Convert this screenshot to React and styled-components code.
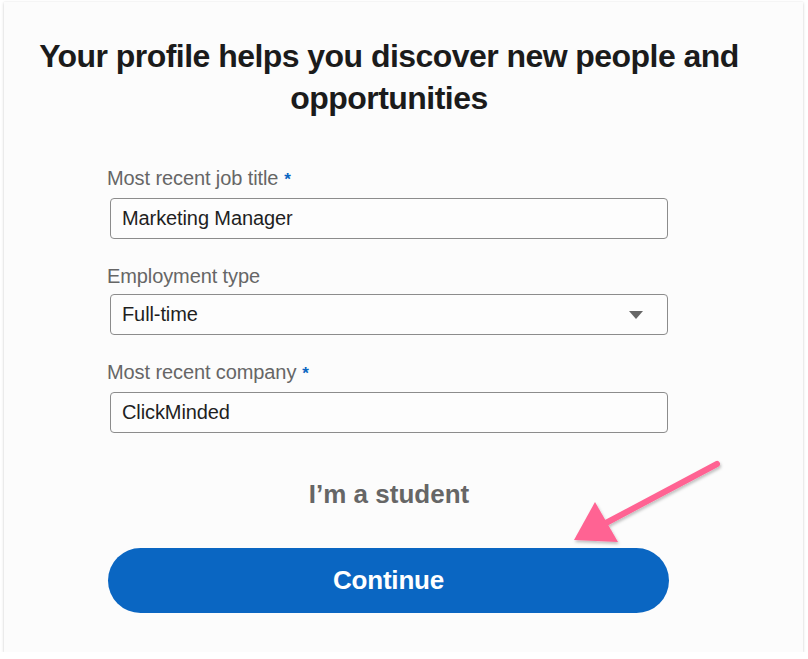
import React from "react";
import styled, { createGlobalStyle } from "styled-components";

const GlobalStyle = createGlobalStyle`
  html, body { margin: 0; padding: 0; background: #ffffff; }
  body { font-family: "Liberation Sans", Arial, Helvetica, sans-serif; }
  * { box-sizing: border-box; }
`;

const Card = styled.div`
  position: relative;
  margin: 2px 0 0 4px;
  width: 799px;
  height: 650px;
  padding-right: 29px;
  background: #fcfcfc;
  box-shadow: 0 1px 3px rgba(0, 0, 0, 0.18), 0 0 1px rgba(0, 0, 0, 0.08);
  display: flex;
  flex-direction: column;
  align-items: center;
`;

const Title = styled.h1`
  margin: 33px 0 0;
  width: 740px;
  text-align: center;
  font-size: 32px;
  line-height: 42px;
  font-weight: 700;
  color: #1b1b1b;
  letter-spacing: -0.55px;
`;

const Form = styled.form`
  margin-top: 47px;
  width: 558px;
  display: flex;
  flex-direction: column;
  align-items: stretch;
`;

const Field = styled.div`
  display: flex;
  flex-direction: column;
  gap: 6px;
  margin-bottom: 25px;
`;

const Label = styled.label`
  font-size: 20px;
  line-height: 24px;
  color: #666666;
  margin-left: -3px;
  letter-spacing: -0.1px;
`;

const Required = styled.span`
  color: #0a66c2;
  margin-left: 6px;
  font-weight: 700;
  font-size: 17px;
`;

const Box = styled.div`
  height: 41px;
  border: 1.5px solid #8c8c8c;
  border-radius: 4px;
  background: #fdfdfd;
  display: flex;
  align-items: center;
  justify-content: space-between;
  padding: 0 ${(p) => (p.$select ? "24px" : "12px")} 0 11px;
  font-size: 20px;
  color: #1f1f1f;
  letter-spacing: -0.1px;
`;

const Caret = styled.span`
  width: 0;
  height: 0;
  border-left: 7px solid transparent;
  border-right: 7px solid transparent;
  border-top: 8px solid #666666;
`;

const Student = styled.div`
  margin-top: 21px;
  text-align: center;
  font-size: 26px;
  line-height: 30px;
  font-weight: 700;
  color: #666666;
`;

const Button = styled.button`
  margin-top: 39px;
  height: 65px;
  width: 561px;
  margin-left: -2px;
  border: none;
  border-radius: 33px;
  background: #0a66c2;
  color: #ffffff;
  font-family: "Liberation Sans", Arial, sans-serif;
  font-size: 26px;
  font-weight: 700;
  letter-spacing: -0.2px;
`;

const Arrow = styled.svg`
  position: absolute;
  left: 0;
  top: 0;
  pointer-events: none;
`;

export default function App() {
  return (
    <>
      <GlobalStyle />
      <Card>
        <Title>Your profile helps you discover new people and opportunities</Title>
        <Form onSubmit={(e) => e.preventDefault()}>
          <Field>
            <Label>
              Most recent job title<Required>*</Required>
            </Label>
            <Box>Marketing Manager</Box>
          </Field>
          <Field>
            <Label>Employment type</Label>
            <Box $select>
              Full-time
              <Caret />
            </Box>
          </Field>
          <Field>
            <Label>
              Most recent company<Required>*</Required>
            </Label>
            <Box>ClickMinded</Box>
          </Field>
          <Student>I’m a student</Student>
          <Button type="button">Continue</Button>
        </Form>
        <Arrow width="799" height="650" viewBox="0 0 799 650">
          <defs>
            <filter id="sh" x="-20%" y="-20%" width="140%" height="140%">
              <feDropShadow dx="1" dy="2" stdDeviation="1.5" floodColor="#000" floodOpacity="0.25" />
            </filter>
          </defs>
          <g filter="url(#sh)" fill="#ff6393">
            <line x1="713" y1="462" x2="600" y2="522" stroke="#ff6393" strokeWidth="6" strokeLinecap="round" />
            <polygon points="570,538 591,500 614,540" />
          </g>
        </Arrow>
      </Card>
    </>
  );
}
